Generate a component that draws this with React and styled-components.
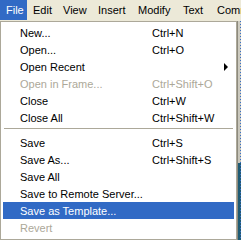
import React from "react";
import styled, { createGlobalStyle } from "styled-components";

const GlobalStyle = createGlobalStyle`
  html, body {
    margin: 0;
    padding: 0;
    background: #ece9d8;
    overflow: hidden;
  }
  body {
    font-family: "Liberation Sans", Arial, sans-serif;
    font-size: 11px;
  }
`;

const bar = [
  { label: "File", width: 27, active: true },
  { label: "Edit", width: 30 },
  { label: "View", width: 35 },
  { label: "Insert", width: 40 },
  { label: "Modify", width: 45 },
  { label: "Text", width: 34 },
  { label: "Commands", width: 70 },
];

const items = [
  { label: "New...", key: "Ctrl+N" },
  { label: "Open...", key: "Ctrl+O" },
  { label: "Open Recent", sub: true },
  { label: "Open in Frame...", key: "Ctrl+Shift+O", disabled: true },
  { label: "Close", key: "Ctrl+W" },
  { label: "Close All", key: "Ctrl+Shift+W" },
  { sep: true },
  { label: "Save", key: "Ctrl+S" },
  { label: "Save As...", key: "Ctrl+Shift+S" },
  { label: "Save All" },
  { label: "Save to Remote Server..." },
  { label: "Save as Template...", selected: true },
  { label: "Revert", disabled: true },
];

export default function App() {
  return (
    <Screen>
      <GlobalStyle />
      <MenuBar>
        {bar.map((b) => (
          <BarItem key={b.label} width={b.width} active={b.active}>
            {b.label}
          </BarItem>
        ))}
      </MenuBar>
      <Workspace>
        <Menu>
          {items.map((it, i) =>
            it.sep ? (
              <Separator key={i} />
            ) : (
              <Item key={i} selected={it.selected} disabled={it.disabled}>
                <Label>{it.label}</Label>
                <Shortcut>{it.key}</Shortcut>
                {it.sub && <Arrow />}
              </Item>
            )
          )}
        </Menu>
        <Backdrop />
      </Workspace>
    </Screen>
  );
}

const Screen = styled.div`
  width: 241px;
  height: 240px;
  display: flex;
  flex-direction: column;
  background: #ece9d8;
`;

const MenuBar = styled.div`
  display: flex;
  height: 21px;
  flex-shrink: 0;
  overflow: hidden;
  background: #ece9d8;
`;

const BarItem = styled.div`
  flex: 0 0 ${(p) => p.width}px;
  height: 20px;
  line-height: 20px;
  padding-left: 6px;
  box-sizing: border-box;
  white-space: nowrap;
  color: ${(p) => (p.active ? "#ffffff" : "#000000")};
  background: ${(p) => (p.active ? "#316ac5" : "transparent")};
`;

const Workspace = styled.div`
  display: flex;
  flex: 1;
  min-height: 0;
`;

const Menu = styled.div`
  width: 237px;
  box-sizing: border-box;
  background: #ffffff;
  border: 1px solid #aca899;
  padding: 2px 2px 3px 2px;
  display: flex;
  flex-direction: column;
`;

const Item = styled.div`
  display: flex;
  align-items: center;
  height: 17px;
  padding-left: 17px;
  position: relative;
  white-space: nowrap;
  background: ${(p) => (p.selected ? "#316ac5" : "transparent")};
  color: ${(p) => (p.selected ? "#ffffff" : p.disabled ? "#aca899" : "#000000")};
`;

const Label = styled.span`
  width: 132px;
  flex-shrink: 0;
`;

const Shortcut = styled.span`
  flex: 1;
`;

const Arrow = styled.span`
  width: 0;
  height: 0;
  margin-right: 6px;
  border-top: 4px solid transparent;
  border-bottom: 4px solid transparent;
  border-left: 4px solid #000000;
`;

const Separator = styled.div`
  height: 8px;
  flex-shrink: 0;
  box-sizing: border-box;
  padding-top: 2px;
  &::before {
    content: "";
    display: block;
    margin: 0 1px 0 1px;
    border-top: 1px solid #aca899;
  }
`;

const Backdrop = styled.div`
  flex: 1;
  background:
    repeating-linear-gradient(180deg, #3a6fc4 0 1px, transparent 1px 3px) 2px 0 / 1px 100% no-repeat,
    linear-gradient(180deg, #cfcdc2 0%, #c7c5ba 65%, #1f5b74 65%, #1f5b74 100%);
  border-left: 1px solid #8d8a7d;
`;
